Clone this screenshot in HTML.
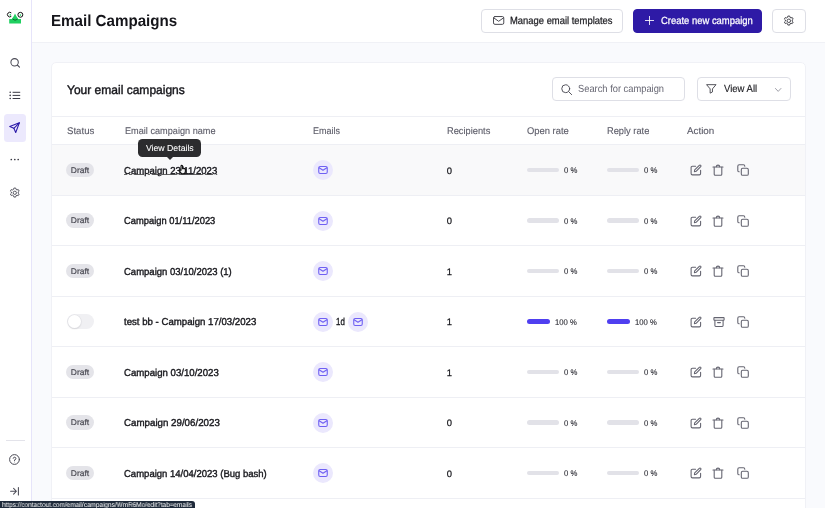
<!DOCTYPE html>
<html lang="en">
<head>
<meta charset="utf-8">
<title>Email Campaigns</title>
<style>
*{box-sizing:border-box;margin:0;padding:0}
html,body{width:825px;height:508px;overflow:hidden}
body{background:#f9fafd;font-family:"Liberation Sans",sans-serif;color:#1b1b1f;position:relative;font-size:9.9px;text-rendering:geometricPrecision}
#wrap{position:absolute;left:0;top:0;width:825px;height:508px;will-change:transform}
#side{position:absolute;left:0;top:0;width:32px;height:508px;background:#fff;border-right:1px solid #e6e4fa}
#top{position:absolute;left:32px;top:0;width:793px;height:43px;background:#fff;border-bottom:1px solid #f0f1f6}
h1{position:absolute;left:51.3px;top:11.2px;font-size:16px;line-height:22px;font-weight:700;color:#15151a;white-space:nowrap}
.btn{position:absolute;top:9px;height:24px;border:1px solid #dedfe6;border-radius:4px;background:#fff;white-space:nowrap;line-height:22px;font-size:10.4px;color:#1d1d22}
.btn span{position:absolute;top:0.8px;-webkit-text-stroke:0.25px currentColor}
.btn.pri{background:#2e1aa6;border-color:#2e1aa6;color:#fff}
svg{position:absolute;overflow:visible}
h1,h2,.btn span,.inp span,.th,.name,.delay,.pct,#st{transform-origin:0 50%}
.badge b,#tip,#st{display:inline-block}
#card{position:absolute;left:51px;top:62px;width:755px;height:460px;background:#fff;border-radius:5px;border:1px solid #f0f1f6}
h2{position:absolute;left:66.5px;top:79.8px;font-size:12.4px;line-height:20px;font-weight:400;color:#15151a;white-space:nowrap;-webkit-text-stroke:0.4px #15151a}
.inp{position:absolute;top:77px;height:24px;border:1px solid #dedfe6;border-radius:4px;background:#fff;white-space:nowrap;line-height:22px;font-size:10.3px}
.inp span{position:absolute;top:0.5px}
#thead{position:absolute;left:52px;top:116px;width:753px;height:29px;border-top:1px solid #eeeff4;border-bottom:1px solid #eeeff4;background:#fff}
.th{position:absolute;top:121.7px;line-height:20px;font-size:9.7px;color:#5d5d69;white-space:nowrap;-webkit-text-stroke:0.12px #5d5d69}
.row{position:absolute;left:0;width:825px;height:50px}
.sep{position:absolute;left:52px;width:753px;height:1px;background:#eeeff4}
.hovbg{position:absolute;left:52px;top:145px;width:753px;height:50px;background:#f9f9fa}
.row>*{position:absolute}
.badge{left:66.4px;top:17.7px;width:28px;height:14.6px;border-radius:8px;background:#e4e4e9;color:#4c4c55;font-size:8.3px;line-height:14.6px;text-align:center;-webkit-text-stroke:0.2px #4c4c55}
.badge b{font-weight:400}
.toggle{left:66.5px;top:17.4px;width:27.7px;height:15.2px;border-radius:8px;background:#f0f0f3}
.toggle i{position:absolute;left:1px;top:1px;width:13.2px;height:13.2px;border-radius:50%;background:#fff;box-shadow:0 0 0 0.6px #e1e1e6,0 0.8px 1.6px rgba(0,0,0,.16)}
.name{left:124.3px;top:16.6px;line-height:20px;font-size:10px;color:#17171c;white-space:nowrap;-webkit-text-stroke:0.38px #17171c}
.name.ul{text-decoration:underline;text-underline-offset:-0.4px;text-decoration-thickness:0.7px;text-decoration-color:#666}
.envw{top:15px;width:20px;height:20px}
.env{left:0;top:0;width:20px;height:20px}
.delay{left:335.5px;top:16.6px;line-height:20px;font-size:10.2px;color:#1b1b20;-webkit-text-stroke:0.35px #1b1b20}
.rec{left:446.7px;top:15.8px;line-height:20px;font-size:9.4px;color:#17171c;-webkit-text-stroke:0.25px #17171c}
.bar{top:22.7px;width:32px;height:4.6px;border-radius:3px;background:#e2e2e8;left:0}
.bar.full{width:23.2px;background:#4f3ff0}
.pct{top:15px;line-height:20px;font-size:8.3px;color:#34343c;white-space:nowrap;-webkit-text-stroke:0.15px #34343c}
.ic{top:19px;width:12px;height:12px;fill:none;stroke:#646470;stroke-width:1.08;stroke-linecap:round;stroke-linejoin:round}
#tipb{position:absolute;left:138px;top:138.5px;width:63px;height:18px;border-radius:4.5px;background:#2c2c2e;color:#fff;font-size:8.7px;line-height:18px;text-align:center;-webkit-text-stroke:0.08px #fff;white-space:nowrap}
#tipb:after{content:"";position:absolute;left:27.5px;top:17.5px;border:4px solid transparent;border-top-color:#2c2c2e;border-bottom:0}
#status{position:absolute;left:0;top:500.5px;height:8px;width:195px;background:#1e2a3a;border-top-right-radius:3px;color:#fff;font-size:6.9px;line-height:9px;padding-left:1.5px;white-space:nowrap;overflow:hidden}
</style>
</head>
<body>
<div id="wrap">
<div id="side">
  <svg style="left:0;top:0;width:32px;height:34px" viewBox="0 0 32 34">
    <path d="M9.2 19.1 H11.8 Q14 16.5 15 13.5 Q16.2 16.5 18.3 19.1 H21 V23.5 H9.2 Z" fill="#1fd060"/>
    <path d="M12.8 19.3 Q15 21.2 17.3 19.5" fill="none" stroke="#0b4a25" stroke-width="0.8" stroke-linecap="round"/>
    <path d="M11.3 12.9 A2.3 2.3 0 1 0 11.3 16.3" fill="none" stroke="#111" stroke-width="1"/>
    <circle cx="10.3" cy="14.9" r="0.8" fill="#1fd060"/>
    <circle cx="20.35" cy="14.8" r="2.45" fill="#fff" stroke="#111" stroke-width="1"/>
    <circle cx="20.4" cy="15.1" r="0.8" fill="#1fd060"/>
  </svg>
  <svg style="left:10px;top:58px;width:10px;height:10px" viewBox="0 0 10 10" fill="none" stroke="#4a4a55" stroke-width="1.05" stroke-linecap="round"><circle cx="4.6" cy="4.3" r="3.7"/><path d="M7.3 7 L9.5 9.1"/></svg>
  <svg style="left:9px;top:90px;width:12px;height:10px" viewBox="0 0 12 10" fill="none" stroke="#3a3a44" stroke-width="1" stroke-linecap="round"><path d="M4 2.3 H10.8 M4 5.4 H10.8 M4 8.5 H10.8"/><g fill="#3a3a44" stroke="none"><circle cx="1.2" cy="2.3" r="0.8"/><circle cx="1.2" cy="5.4" r="0.8"/><circle cx="1.2" cy="8.5" r="0.8"/></g></svg>
  <div style="position:absolute;left:4px;top:113.7px;width:22px;height:28px;border-radius:3.5px;background:#ece9fd"></div>
  <svg style="left:9.3px;top:122px;width:11.2px;height:11.2px" viewBox="0 0 12 12" fill="none" stroke="#2a18a8" stroke-width="1.15" stroke-linejoin="round" stroke-linecap="round"><path d="M11.1 0.9 L0.8 4.8 L5.2 6.8 L7.2 11.2 Z"/><path d="M5.2 6.8 L11.1 0.9"/></svg>
  <svg style="left:10px;top:158.2px;width:10px;height:3px" viewBox="0 0 10 3" fill="#3a3a44"><circle cx="1.3" cy="1.5" r="0.85"/><circle cx="4.8" cy="1.5" r="0.85"/><circle cx="8.2" cy="1.5" r="0.85"/></svg>
  <svg style="left:9.2px;top:186.6px;width:11.6px;height:11.6px" viewBox="0 0 24 24" fill="none" stroke="#55555f" stroke-width="2" stroke-linejoin="round"><circle cx="12" cy="12" r="3.4"/><path d="M10.1 2.2 h3.8 l0.6 2.7 2.0 1.15 2.65-0.85 1.9 3.3 -2.05 1.85 v2.3 l2.05 1.85 -1.9 3.3 -2.65-0.85 -2.0 1.15 -0.6 2.7 h-3.8 l-0.6-2.7 -2.0-1.15 -2.65 0.85 -1.9-3.3 2.05-1.85 v-2.3 l-2.05-1.85 1.9-3.3 2.65 0.85 2.0-1.15 z"/></svg>
  <div style="position:absolute;left:5.5px;top:440px;width:19.5px;height:1px;background:#e3e3ea"></div>
  <svg style="left:9.1px;top:453.6px;width:11px;height:11px" viewBox="0 0 11 11" fill="none" stroke="#4a4a55" stroke-width="1" stroke-linecap="round"><circle cx="5.5" cy="5.5" r="4.9"/><path d="M4.2 4.3 A1.35 1.35 0 1 1 5.5 5.9 V6.5"/><circle cx="5.5" cy="8" r="0.45" fill="#4a4a55" stroke="none"/></svg>
  <svg style="left:10px;top:487px;width:9px;height:8.5px" viewBox="0 0 9 8.5" fill="none" stroke="#4a4a55" stroke-width="1.05" stroke-linecap="round" stroke-linejoin="round"><path d="M0.6 4.25 H6.2 M3.6 1.4 L6.4 4.25 L3.6 7.1 M8.4 0.6 V7.9"/></svg>
</div>
<div id="top"></div>
<h1 id="h1" style="transform:scaleX(0.9462);">Email Campaigns</h1>

<div class="btn" style="left:481px;width:142px">
  <svg style="left:10.6px;top:6.1px;width:11.3px;height:8.9px" viewBox="0 0 12 9.4" fill="none" stroke="#48484f" stroke-width="1.05" stroke-linejoin="round" stroke-linecap="round"><rect x="0.55" y="0.55" width="10.9" height="8.3" rx="1.5"/><path d="M0.9 2 L6 5.6 L11.1 2"/></svg>
  <span id="b1" style="left:28px;transform:scaleX(0.9059);">Manage email templates</span>
</div>
<div class="btn pri" style="left:632.5px;width:129.5px">
  <svg style="left:11.5px;top:6.2px;width:9px;height:9px" viewBox="0 0 9 9" fill="none" stroke="#fff" stroke-width="0.85" stroke-linecap="round"><path d="M4.5 0.4 V8.6 M0.4 4.5 H8.6"/></svg>
  <span id="b2" style="left:27px;transform:scaleX(0.9082);">Create new campaign</span>
</div>
<div class="btn" style="left:772px;width:34px">
  <svg style="left:9.6px;top:5.3px;width:11.6px;height:11.6px" viewBox="0 0 24 24" fill="none" stroke="#3a3a42" stroke-width="1.9" stroke-linejoin="round"><circle cx="12" cy="12" r="3.6"/><path d="M10.1 2.2 h3.8 l0.6 2.7 2.0 1.15 2.65-0.85 1.9 3.3 -2.05 1.85 v2.3 l2.05 1.85 -1.9 3.3 -2.65-0.85 -2.0 1.15 -0.6 2.7 h-3.8 l-0.6-2.7 -2.0-1.15 -2.65 0.85 -1.9-3.3 2.05-1.85 v-2.3 l-2.05-1.85 1.9-3.3 2.65 0.85 2.0-1.15 z"/></svg>
</div>

<div id="card"></div>
<h2 id="h2" style="transform:scaleX(0.9699);">Your email campaigns</h2>

<div class="inp" style="left:552px;width:133px">
  <svg style="left:7.6px;top:5.6px;width:11.3px;height:11.3px" viewBox="0 0 12 12" fill="none" stroke="#4a4a54" stroke-width="1" stroke-linecap="round"><circle cx="5" cy="5" r="4.2"/><path d="M8.1 8.1 L11.3 11.3"/></svg>
  <span id="s1" style="left:24.8px;color:#666672;transform:scaleX(0.9056);">Search for campaign</span>
</div>
<div class="inp" style="left:697px;width:93.5px">
  <svg style="left:7.6px;top:6.4px;width:10.6px;height:9.8px" viewBox="0 0 11 10" fill="none" stroke="#3a3a42" stroke-width="0.9" stroke-linejoin="round"><path d="M0.6 0.6 H10.4 L6.7 5 V8.2 L4.3 9.4 V5 Z"/></svg>
  <span id="s2" style="left:26px;color:#1d1d22;-webkit-text-stroke:0.15px #1d1d22;transform:scaleX(0.9254);">View All</span>
  <svg style="left:77.3px;top:10px;width:6.4px;height:4px" viewBox="0 0 7 4.5" fill="none" stroke="#878792" stroke-width="0.9" stroke-linecap="round" stroke-linejoin="round"><path d="M0.4 0.5 L3.5 3.8 L6.6 0.5"/></svg>
</div>

<div id="thead"></div>
<span class="th" id="t1" style="left:66.5px;transform:scaleX(0.9939);">Status</span>
<span class="th" id="t2" style="left:124.5px;transform:scaleX(0.9446);">Email campaign name</span>
<span class="th" id="t3" style="left:313px;transform:scaleX(0.9303);">Emails</span>
<span class="th" id="t4" style="left:447px;transform:scaleX(0.9572);">Recipients</span>
<span class="th" id="t5" style="left:526.7px;transform:scaleX(0.9700);">Open rate</span>
<span class="th" id="t6" style="left:607px;transform:scaleX(0.9580);">Reply rate</span>
<span class="th" id="t7" style="left:687px;transform:scaleX(1.0135);">Action</span>

<div class="hovbg"></div>
<div class="sep" style="top:195px"></div>
<div class="row" style="top:145px">
  <span class="badge"><b id="bd" style="transform:scaleX(1.0175);">Draft</b></span>
  <span class="name ul" id="n0" style="transform:scaleX(0.9542);">Campaign 23/11/2023</span>
  <span class="envw" style="left:313px"><svg class="env" viewBox="0 0 20 20"><circle cx="10" cy="10" r="10" fill="#ebe8fd"/><rect x="5.75" y="6.55" width="8.5" height="6.9" rx="1.4" fill="none" stroke="#6f60f3" stroke-width="1.1"/><path d="M6.1 7.7 L10 10.3 L13.9 7.7" fill="none" stroke="#6f60f3" stroke-width="1.05" stroke-linecap="round" stroke-linejoin="round"/></svg></span>
  <span class="rec">0</span>
  <span class="bar" style="left:527px"></span><span class="pct" id="p0" style="left:564.3px;transform:scaleX(0.9303);">0 %</span>
  <span class="bar" style="left:607px"></span><span class="pct" style="left:644.3px;transform:scaleX(0.9303);">0 %</span>
  <svg class="ic" style="left:689.5px" viewBox="0 0 12 12"><path d="M10.6 6.2 V9.6 A1.3 1.3 0 0 1 9.3 10.9 H2.4 A1.3 1.3 0 0 1 1.1 9.6 V3.6 A1.3 1.3 0 0 1 2.4 2.3 H5.6" /><path d="M4.4 7.7 L4.7 5.9 L9.3 1.3 A0.9 0.9 0 0 1 10.7 2.7 L6.1 7.3 Z"/></svg><svg class="ic" style="left:712px" viewBox="0 0 12 12"><path d="M1 3 H11"/><path d="M4.3 2.8 C4.3 0.6 7.7 0.6 7.7 2.8"/><path d="M2.2 3.2 V10.3 A1 1 0 0 0 3.2 11.3 H8.8 A1 1 0 0 0 9.8 10.3 V3.2"/></svg><svg class="ic" style="left:737px" viewBox="0 0 12 12"><rect x="4.3" y="4.3" width="7" height="7" rx="1.4"/><path d="M2.2 7.8 A1.4 1.4 0 0 1 0.8 6.4 V2.2 A1.4 1.4 0 0 1 2.2 0.8 H6.4 A1.4 1.4 0 0 1 7.8 2.2"/></svg>
</div>
<div class="sep" style="top:245px"></div>
<div class="row" style="top:195.5px">
  <span class="badge"><b style="transform:scaleX(1.0175);">Draft</b></span>
  <span class="name" id="n1" style="transform:scaleX(0.9348);">Campaign 01/11/2023</span>
  <span class="envw" style="left:313px"><svg class="env" viewBox="0 0 20 20"><circle cx="10" cy="10" r="10" fill="#ebe8fd"/><rect x="5.75" y="6.55" width="8.5" height="6.9" rx="1.4" fill="none" stroke="#6f60f3" stroke-width="1.1"/><path d="M6.1 7.7 L10 10.3 L13.9 7.7" fill="none" stroke="#6f60f3" stroke-width="1.05" stroke-linecap="round" stroke-linejoin="round"/></svg></span>
  <span class="rec">0</span>
  <span class="bar" style="left:527px"></span><span class="pct" style="left:564.3px;transform:scaleX(0.9303);">0 %</span>
  <span class="bar" style="left:607px"></span><span class="pct" style="left:644.3px;transform:scaleX(0.9303);">0 %</span>
  <svg class="ic" style="left:689.5px" viewBox="0 0 12 12"><path d="M10.6 6.2 V9.6 A1.3 1.3 0 0 1 9.3 10.9 H2.4 A1.3 1.3 0 0 1 1.1 9.6 V3.6 A1.3 1.3 0 0 1 2.4 2.3 H5.6" /><path d="M4.4 7.7 L4.7 5.9 L9.3 1.3 A0.9 0.9 0 0 1 10.7 2.7 L6.1 7.3 Z"/></svg><svg class="ic" style="left:712px" viewBox="0 0 12 12"><path d="M1 3 H11"/><path d="M4.3 2.8 C4.3 0.6 7.7 0.6 7.7 2.8"/><path d="M2.2 3.2 V10.3 A1 1 0 0 0 3.2 11.3 H8.8 A1 1 0 0 0 9.8 10.3 V3.2"/></svg><svg class="ic" style="left:737px" viewBox="0 0 12 12"><rect x="4.3" y="4.3" width="7" height="7" rx="1.4"/><path d="M2.2 7.8 A1.4 1.4 0 0 1 0.8 6.4 V2.2 A1.4 1.4 0 0 1 2.2 0.8 H6.4 A1.4 1.4 0 0 1 7.8 2.2"/></svg>
</div>
<div class="sep" style="top:296px"></div>
<div class="row" style="top:246px">
  <span class="badge"><b style="transform:scaleX(1.0175);">Draft</b></span>
  <span class="name" id="n2" style="transform:scaleX(0.9504);">Campaign 03/10/2023 (1)</span>
  <span class="envw" style="left:313px"><svg class="env" viewBox="0 0 20 20"><circle cx="10" cy="10" r="10" fill="#ebe8fd"/><rect x="5.75" y="6.55" width="8.5" height="6.9" rx="1.4" fill="none" stroke="#6f60f3" stroke-width="1.1"/><path d="M6.1 7.7 L10 10.3 L13.9 7.7" fill="none" stroke="#6f60f3" stroke-width="1.05" stroke-linecap="round" stroke-linejoin="round"/></svg></span>
  <span class="rec">1</span>
  <span class="bar" style="left:527px"></span><span class="pct" style="left:564.3px;transform:scaleX(0.9303);">0 %</span>
  <span class="bar" style="left:607px"></span><span class="pct" style="left:644.3px;transform:scaleX(0.9303);">0 %</span>
  <svg class="ic" style="left:689.5px" viewBox="0 0 12 12"><path d="M10.6 6.2 V9.6 A1.3 1.3 0 0 1 9.3 10.9 H2.4 A1.3 1.3 0 0 1 1.1 9.6 V3.6 A1.3 1.3 0 0 1 2.4 2.3 H5.6" /><path d="M4.4 7.7 L4.7 5.9 L9.3 1.3 A0.9 0.9 0 0 1 10.7 2.7 L6.1 7.3 Z"/></svg><svg class="ic" style="left:712px" viewBox="0 0 12 12"><path d="M1 3 H11"/><path d="M4.3 2.8 C4.3 0.6 7.7 0.6 7.7 2.8"/><path d="M2.2 3.2 V10.3 A1 1 0 0 0 3.2 11.3 H8.8 A1 1 0 0 0 9.8 10.3 V3.2"/></svg><svg class="ic" style="left:737px" viewBox="0 0 12 12"><rect x="4.3" y="4.3" width="7" height="7" rx="1.4"/><path d="M2.2 7.8 A1.4 1.4 0 0 1 0.8 6.4 V2.2 A1.4 1.4 0 0 1 2.2 0.8 H6.4 A1.4 1.4 0 0 1 7.8 2.2"/></svg>
</div>
<div class="sep" style="top:346px"></div>
<div class="row" style="top:296.5px">
  <span class="toggle"><i></i></span>
  <span class="name" id="n3" style="transform:scaleX(0.9634);">test bb - Campaign 17/03/2023</span>
  <span class="envw" style="left:313px"><svg class="env" viewBox="0 0 20 20"><circle cx="10" cy="10" r="10" fill="#ebe8fd"/><rect x="5.75" y="6.55" width="8.5" height="6.9" rx="1.4" fill="none" stroke="#6f60f3" stroke-width="1.1"/><path d="M6.1 7.7 L10 10.3 L13.9 7.7" fill="none" stroke="#6f60f3" stroke-width="1.05" stroke-linecap="round" stroke-linejoin="round"/></svg></span>
  <span class="delay" id="dl" style="transform:scaleX(0.7758);">1d</span>
  <span class="envw" style="left:347.7px"><svg class="env" viewBox="0 0 20 20"><circle cx="10" cy="10" r="10" fill="#ebe8fd"/><rect x="5.75" y="6.55" width="8.5" height="6.9" rx="1.4" fill="none" stroke="#6f60f3" stroke-width="1.1"/><path d="M6.1 7.7 L10 10.3 L13.9 7.7" fill="none" stroke="#6f60f3" stroke-width="1.05" stroke-linecap="round" stroke-linejoin="round"/></svg></span>
  <span class="rec">1</span>
  <span class="bar full" style="left:527px"></span><span class="pct" id="p1" style="left:555.2px;transform:scaleX(0.9264);">100 %</span>
  <span class="bar full" style="left:607px"></span><span class="pct" style="left:635.2px;transform:scaleX(0.9264);">100 %</span>
  <svg class="ic" style="left:689.5px" viewBox="0 0 12 12"><path d="M10.6 6.2 V9.6 A1.3 1.3 0 0 1 9.3 10.9 H2.4 A1.3 1.3 0 0 1 1.1 9.6 V3.6 A1.3 1.3 0 0 1 2.4 2.3 H5.6" /><path d="M4.4 7.7 L4.7 5.9 L9.3 1.3 A0.9 0.9 0 0 1 10.7 2.7 L6.1 7.3 Z"/></svg><svg class="ic" style="left:712.5px" viewBox="0 0 12 12"><rect x="0.9" y="1.6" width="10.2" height="2.6" rx="0.5"/><path d="M1.9 4.4 V9.6 A0.9 0.9 0 0 0 2.8 10.5 H9.2 A0.9 0.9 0 0 0 10.1 9.6 V4.4"/><path d="M4.6 6.6 H7.4"/></svg><svg class="ic" style="left:737px" viewBox="0 0 12 12"><rect x="4.3" y="4.3" width="7" height="7" rx="1.4"/><path d="M2.2 7.8 A1.4 1.4 0 0 1 0.8 6.4 V2.2 A1.4 1.4 0 0 1 2.2 0.8 H6.4 A1.4 1.4 0 0 1 7.8 2.2"/></svg>
</div>
<div class="sep" style="top:397px"></div>
<div class="row" style="top:347px">
  <span class="badge"><b style="transform:scaleX(1.0175);">Draft</b></span>
  <span class="name" id="n4" style="transform:scaleX(0.9632);">Campaign 03/10/2023</span>
  <span class="envw" style="left:313px"><svg class="env" viewBox="0 0 20 20"><circle cx="10" cy="10" r="10" fill="#ebe8fd"/><rect x="5.75" y="6.55" width="8.5" height="6.9" rx="1.4" fill="none" stroke="#6f60f3" stroke-width="1.1"/><path d="M6.1 7.7 L10 10.3 L13.9 7.7" fill="none" stroke="#6f60f3" stroke-width="1.05" stroke-linecap="round" stroke-linejoin="round"/></svg></span>
  <span class="rec">1</span>
  <span class="bar" style="left:527px"></span><span class="pct" style="left:564.3px;transform:scaleX(0.9303);">0 %</span>
  <span class="bar" style="left:607px"></span><span class="pct" style="left:644.3px;transform:scaleX(0.9303);">0 %</span>
  <svg class="ic" style="left:689.5px" viewBox="0 0 12 12"><path d="M10.6 6.2 V9.6 A1.3 1.3 0 0 1 9.3 10.9 H2.4 A1.3 1.3 0 0 1 1.1 9.6 V3.6 A1.3 1.3 0 0 1 2.4 2.3 H5.6" /><path d="M4.4 7.7 L4.7 5.9 L9.3 1.3 A0.9 0.9 0 0 1 10.7 2.7 L6.1 7.3 Z"/></svg><svg class="ic" style="left:712px" viewBox="0 0 12 12"><path d="M1 3 H11"/><path d="M4.3 2.8 C4.3 0.6 7.7 0.6 7.7 2.8"/><path d="M2.2 3.2 V10.3 A1 1 0 0 0 3.2 11.3 H8.8 A1 1 0 0 0 9.8 10.3 V3.2"/></svg><svg class="ic" style="left:737px" viewBox="0 0 12 12"><rect x="4.3" y="4.3" width="7" height="7" rx="1.4"/><path d="M2.2 7.8 A1.4 1.4 0 0 1 0.8 6.4 V2.2 A1.4 1.4 0 0 1 2.2 0.8 H6.4 A1.4 1.4 0 0 1 7.8 2.2"/></svg>
</div>
<div class="sep" style="top:447px"></div>
<div class="row" style="top:397.5px">
  <span class="badge"><b style="transform:scaleX(1.0175);">Draft</b></span>
  <span class="name" id="n5" style="transform:scaleX(0.9734);">Campaign 29/06/2023</span>
  <span class="envw" style="left:313px"><svg class="env" viewBox="0 0 20 20"><circle cx="10" cy="10" r="10" fill="#ebe8fd"/><rect x="5.75" y="6.55" width="8.5" height="6.9" rx="1.4" fill="none" stroke="#6f60f3" stroke-width="1.1"/><path d="M6.1 7.7 L10 10.3 L13.9 7.7" fill="none" stroke="#6f60f3" stroke-width="1.05" stroke-linecap="round" stroke-linejoin="round"/></svg></span>
  <span class="rec">0</span>
  <span class="bar" style="left:527px"></span><span class="pct" style="left:564.3px;transform:scaleX(0.9303);">0 %</span>
  <span class="bar" style="left:607px"></span><span class="pct" style="left:644.3px;transform:scaleX(0.9303);">0 %</span>
  <svg class="ic" style="left:689.5px" viewBox="0 0 12 12"><path d="M10.6 6.2 V9.6 A1.3 1.3 0 0 1 9.3 10.9 H2.4 A1.3 1.3 0 0 1 1.1 9.6 V3.6 A1.3 1.3 0 0 1 2.4 2.3 H5.6" /><path d="M4.4 7.7 L4.7 5.9 L9.3 1.3 A0.9 0.9 0 0 1 10.7 2.7 L6.1 7.3 Z"/></svg><svg class="ic" style="left:712px" viewBox="0 0 12 12"><path d="M1 3 H11"/><path d="M4.3 2.8 C4.3 0.6 7.7 0.6 7.7 2.8"/><path d="M2.2 3.2 V10.3 A1 1 0 0 0 3.2 11.3 H8.8 A1 1 0 0 0 9.8 10.3 V3.2"/></svg><svg class="ic" style="left:737px" viewBox="0 0 12 12"><rect x="4.3" y="4.3" width="7" height="7" rx="1.4"/><path d="M2.2 7.8 A1.4 1.4 0 0 1 0.8 6.4 V2.2 A1.4 1.4 0 0 1 2.2 0.8 H6.4 A1.4 1.4 0 0 1 7.8 2.2"/></svg>
</div>
<div class="sep" style="top:498px"></div>
<div class="row" style="top:448px">
  <span class="badge"><b style="transform:scaleX(1.0175);">Draft</b></span>
  <span class="name" id="n6" style="transform:scaleX(0.9513);">Campaign 14/04/2023 (Bug bash)</span>
  <span class="envw" style="left:313px"><svg class="env" viewBox="0 0 20 20"><circle cx="10" cy="10" r="10" fill="#ebe8fd"/><rect x="5.75" y="6.55" width="8.5" height="6.9" rx="1.4" fill="none" stroke="#6f60f3" stroke-width="1.1"/><path d="M6.1 7.7 L10 10.3 L13.9 7.7" fill="none" stroke="#6f60f3" stroke-width="1.05" stroke-linecap="round" stroke-linejoin="round"/></svg></span>
  <span class="rec">0</span>
  <span class="bar" style="left:527px"></span><span class="pct" style="left:564.3px;transform:scaleX(0.9303);">0 %</span>
  <span class="bar" style="left:607px"></span><span class="pct" style="left:644.3px;transform:scaleX(0.9303);">0 %</span>
  <svg class="ic" style="left:689.5px" viewBox="0 0 12 12"><path d="M10.6 6.2 V9.6 A1.3 1.3 0 0 1 9.3 10.9 H2.4 A1.3 1.3 0 0 1 1.1 9.6 V3.6 A1.3 1.3 0 0 1 2.4 2.3 H5.6" /><path d="M4.4 7.7 L4.7 5.9 L9.3 1.3 A0.9 0.9 0 0 1 10.7 2.7 L6.1 7.3 Z"/></svg><svg class="ic" style="left:712px" viewBox="0 0 12 12"><path d="M1 3 H11"/><path d="M4.3 2.8 C4.3 0.6 7.7 0.6 7.7 2.8"/><path d="M2.2 3.2 V10.3 A1 1 0 0 0 3.2 11.3 H8.8 A1 1 0 0 0 9.8 10.3 V3.2"/></svg><svg class="ic" style="left:737px" viewBox="0 0 12 12"><rect x="4.3" y="4.3" width="7" height="7" rx="1.4"/><path d="M2.2 7.8 A1.4 1.4 0 0 1 0.8 6.4 V2.2 A1.4 1.4 0 0 1 2.2 0.8 H6.4 A1.4 1.4 0 0 1 7.8 2.2"/></svg>
</div>

<div id="tipb"><span id="tip" style="transform:scaleX(1.0030);">View Details</span></div>
<svg style="left:179.4px;top:164.6px;width:7px;height:9.4px" viewBox="0 0 7 9.4"><path d="M2 5.4 V1.2 a0.8 0.8 0 0 1 1.6 0 V3.7 a0.75 0.75 0 0 1 1.4 0.15 a0.75 0.75 0 0 1 1.4 0.35 V6.5 c0 1.5 -0.9 2.4 -2.3 2.4 H3.6 C2.6 8.9 2.1 8.4 1.6 7.6 L0.6 6 a0.65 0.65 0 0 1 1.05 -0.75 z" fill="#f4f4f4" stroke="#111" stroke-width="1.15" stroke-linejoin="round"/></svg>
<div id="status"><span id="st" style="transform:scaleX(0.9317);">https://contactout.com/email/campaigns/WmR6Mo/edit?tab=emails</span></div>
</div>
</body>
</html>
